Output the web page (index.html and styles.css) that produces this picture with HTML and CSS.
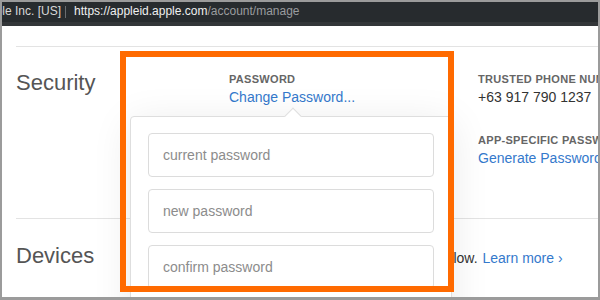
FILE: index.html
```html
<!DOCTYPE html>
<html lang="en">
<head>
    <meta charset="UTF-8">
    <meta name="viewport" content="width=device-width, initial-scale=1.0">
    <title>Apple ID - Manage</title>
    <link rel="stylesheet" href="styles.css">
</head>
<body>
    <div class="window">
        <div class="addressbar">
            <span class="cert">Apple Inc. [US]</span>
            <span class="divider"></span>
            <span class="url"><span class="host">https://appleid.apple.com</span>/account/manage</span>
        </div>

        <div class="page">
            <div class="section security">
                <h2 class="section-title">Security</h2>
                <div class="column">
                    <div class="label">PASSWORD</div>
                    <a class="link" href="#">Change Password...</a>
                </div>
                <div class="column">
                    <div class="label">TRUSTED PHONE NUMBERS</div>
                    <div class="value">+63 917 790 1237</div>
                    <div class="label label-gap">APP-SPECIFIC PASSWORDS</div>
                    <a class="link" href="#">Generate Password...</a>
                </div>
            </div>

            <div class="section devices">
                <h2 class="section-title">Devices</h2>
                <p class="note">You are signed in to the devices below. <a class="link learn" href="#">Learn more &rsaquo;</a></p>
            </div>

            <div class="popover">
                <input class="pw-input" type="password" placeholder="current password">
                <input class="pw-input" type="password" placeholder="new password">
                <input class="pw-input" type="password" placeholder="confirm password">
            </div>

            <div class="highlight"></div>
        </div>
    </div>
</body>
</html>
```

FILE: styles.css
```css
html, body {
    margin: 0;
    padding: 0;
    background: #fff;
}

body {
    font-family: "Liberation Sans", Arial, sans-serif;
}

.window {
    width: 600px;
    height: 300px;
    box-sizing: border-box;
    border: 2px solid #9b9b9b;
    border-bottom-width: 3px;
    overflow: hidden;
    background: #fff;
}

/* browser address bar */
.addressbar {
    height: 20px;
    line-height: 18px;
    background: #272b2e;
    border-bottom: 4px solid #333639;
    font-size: 12px;
    color: #d8d8d8;
    white-space: nowrap;
    overflow: hidden;
    display: flex;
    align-items: flex-start;
}

.cert {
    margin-left: -21px;
}

.divider {
    width: 1px;
    height: 12px;
    margin: 4px 8px 0 4px;
    background: #6a6d70;
}

.url {
    color: #9a9c9e;
}

.url .host {
    color: #f0f0f0;
}

/* page content */
.page {
    position: relative;
    padding: 20px 0 0 14px;
}

.section {
    border-top: 1px solid #e3e3e3;
    display: grid;
    grid-template-columns: 213px 249px 1fr;
    align-items: start;
    box-sizing: border-box;
    white-space: nowrap;
}

.security {
    height: 172px;
    padding-top: 23px;
}

.devices {
    padding-top: 24px;
}

.section-title {
    margin: 0;
    font-size: 22px;
    line-height: 26px;
    font-weight: normal;
    color: #555;
}

.column {
    display: flex;
    flex-direction: column;
    align-items: flex-start;
    margin-top: 2px;
}

.label {
    font-size: 11px;
    line-height: 14px;
    font-weight: bold;
    letter-spacing: 0.3px;
    color: #666;
    margin-bottom: 2px;
}

.label-gap {
    margin-top: 27px;
}

.value {
    font-size: 14px;
    line-height: 18px;
    color: #333;
}

.link {
    font-size: 14px;
    line-height: 18px;
    color: #3479cc;
    text-decoration: none;
}

.note {
    grid-column: 2 / 4;
    margin: 6px 0 0 7px;
    font-size: 14px;
    line-height: 18px;
    color: #333;
}

.learn {
    margin-left: 1px;
}

/* change password popover */
.popover {
    position: absolute;
    left: 128px;
    top: 90px;
    width: 322px;
    height: 220px;
    box-sizing: border-box;
    padding: 16px 0 0 17px;
    background: #fff;
    border: 1px solid #dedede;
    border-radius: 4px;
    box-shadow: 0 6px 40px rgba(0, 0, 0, 0.09);
    display: flex;
    flex-direction: column;
    gap: 12px;
}

.popover::before {
    content: "";
    position: absolute;
    left: 156px;
    top: -7px;
    width: 11px;
    height: 11px;
    background: #fff;
    border-top: 1px solid #dedede;
    border-left: 1px solid #dedede;
    transform: rotate(45deg);
}

.pw-input {
    width: 286px;
    height: 44px;
    box-sizing: border-box;
    padding: 0 14px;
    border: 1px solid #dcdcdc;
    border-radius: 4px;
    font-family: "Liberation Sans", Arial, sans-serif;
    font-size: 14px;
    color: #333;
    background: #fff;
    outline: none;
}

.pw-input::placeholder {
    color: #8c8c8c;
}

/* annotation frame */
.highlight {
    position: absolute;
    left: 118px;
    top: 25px;
    width: 334px;
    height: 241px;
    box-sizing: border-box;
    border: 6px solid #ff6a00;
}
```
